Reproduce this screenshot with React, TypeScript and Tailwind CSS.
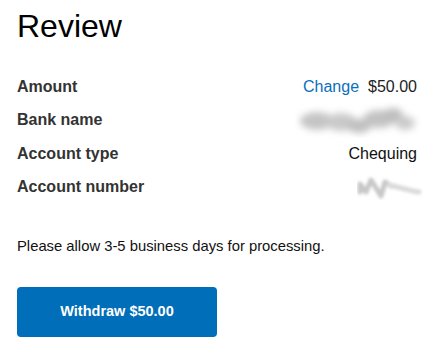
const rows = [
  { label: 'Amount', kind: 'amount' },
  { label: 'Bank name', kind: 'bank' },
  { label: 'Account type', kind: 'type' },
  { label: 'Account number', kind: 'number' },
];

// smudged-out bank name
const BankBlur = () => (
  <svg width="128" height="36" viewBox="0 0 128 36" className="block">
    <defs>
      <filter id="b1" x="-20%" y="-60%" width="140%" height="220%">
        <feGaussianBlur stdDeviation="3.6" />
      </filter>
    </defs>
    <g filter="url(#b1)">
      <ellipse cx="22" cy="19" rx="17" ry="9" fill="#c4c4c4" />
      <ellipse cx="46" cy="20" rx="16" ry="9" fill="#c9c9c9" />
      <ellipse cx="64" cy="24" rx="12" ry="7" fill="#c0c0c0" />
      <ellipse cx="84" cy="17" rx="16" ry="9" fill="#c2c2c2" />
      <ellipse cx="98" cy="13" rx="10" ry="7" fill="#bebebe" />
      <ellipse cx="110" cy="21" rx="10" ry="7" fill="#cbcbcb" />
    </g>
  </svg>
);

// smudged-out account number
const NumberBlur = () => (
  <svg width="66" height="26" viewBox="0 0 66 26" className="block">
    <defs>
      <filter id="b2" x="-20%" y="-60%" width="140%" height="220%">
        <feGaussianBlur stdDeviation="1.8" />
      </filter>
    </defs>
    <g filter="url(#b2)" fill="none" strokeLinecap="round" strokeLinejoin="round">
      <path d="M3 18 L3 10 L9 18 L14 6 L19 14 L24 22 L28 8 L34 12" stroke="#c8c8c8" strokeWidth="5" />
      <path d="M32 11 L44 14 L56 17 L62 18" stroke="#dadada" strokeWidth="5" />
    </g>
  </svg>
);

export default function App() {
  return (
    <div className="min-h-screen bg-white px-[17px] pt-[8px] font-['Liberation_Sans',Arial,sans-serif]">
      <h1 className="text-[32px] leading-[37px] text-black">Review</h1>

      <div className="mt-[25px] w-[400px]">
        {rows.map((r) => (
          <div key={r.label} className="flex h-[33.5px] items-center justify-between">
            <span className="text-[16px] font-bold text-[#333]">{r.label}</span>
            {r.kind === 'amount' && (
              <span className="flex items-center gap-[9px] text-[16px]">
                <a href="#" className="text-[#0b6fbd]">Change</a>
                <span className="text-[#222]">$50.00</span>
              </span>
            )}
            {r.kind === 'bank' && (
              <span className="mr-[-6px]">
                <BankBlur />
              </span>
            )}
            {r.kind === 'type' && <span className="text-[16px] text-[#111]">Chequing</span>}
            {r.kind === 'number' && (
              <span className="mr-[-6px]">
                <NumberBlur />
              </span>
            )}
          </div>
        ))}
      </div>

      <p className="mt-[32px] text-[14.8px] leading-[20px] text-[#111]">
        Please allow 3-5 business days for processing.
      </p>

      <button
        type="button"
        className="mt-[31px] h-[50px] w-[200px] rounded-[4px] bg-[#006eb8] text-[14.5px] font-bold text-white"
      >
        Withdraw $50.00
      </button>
    </div>
  );
}
